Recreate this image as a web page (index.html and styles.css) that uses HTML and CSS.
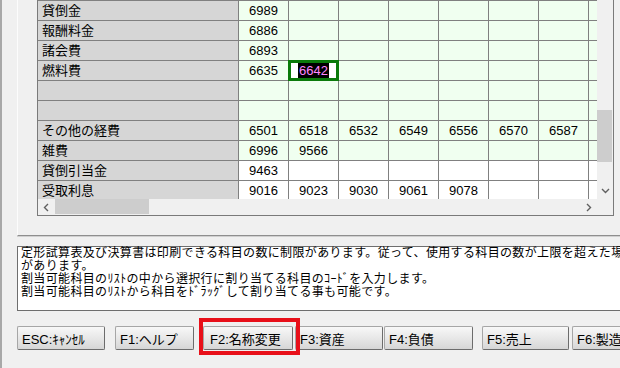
FILE: index.html
```html
<!DOCTYPE html>
<html lang="ja">
<head>
    <meta charset="UTF-8">
    <title>科目割当</title>
    <link rel="stylesheet" href="styles.css">
</head>
<body>
    <div class="window">
        <div class="group">
            <div class="grid-box">
                <div class="rows">
                    <div class="row green">
                        <div class="name">貸倒金</div><div class="cell code">6989</div>
                        <div class="cell"></div><div class="cell"></div><div class="cell"></div><div class="cell"></div><div class="cell"></div><div class="cell"></div>
                        <div class="fill"></div>
                    </div>
                    <div class="row green">
                        <div class="name">報酬料金</div><div class="cell code">6886</div>
                        <div class="cell"></div><div class="cell"></div><div class="cell"></div><div class="cell"></div><div class="cell"></div><div class="cell"></div>
                        <div class="fill"></div>
                    </div>
                    <div class="row green">
                        <div class="name">諸会費</div><div class="cell code">6893</div>
                        <div class="cell"></div><div class="cell"></div><div class="cell"></div><div class="cell"></div><div class="cell"></div><div class="cell"></div>
                        <div class="fill"></div>
                    </div>
                    <div class="row green">
                        <div class="name">燃料費</div><div class="cell code">6635</div>
                        <div class="cell edit"><span class="sel">6642</span></div><div class="cell"></div><div class="cell"></div><div class="cell"></div><div class="cell"></div><div class="cell"></div>
                        <div class="fill"></div>
                    </div>
                    <div class="row green">
                        <div class="name"></div><div class="cell code"></div>
                        <div class="cell"></div><div class="cell"></div><div class="cell"></div><div class="cell"></div><div class="cell"></div><div class="cell"></div>
                        <div class="fill"></div>
                    </div>
                    <div class="row green">
                        <div class="name"></div><div class="cell code"></div>
                        <div class="cell"></div><div class="cell"></div><div class="cell"></div><div class="cell"></div><div class="cell"></div><div class="cell"></div>
                        <div class="fill"></div>
                    </div>
                    <div class="row green">
                        <div class="name">その他の経費</div><div class="cell code">6501</div>
                        <div class="cell">6518</div><div class="cell">6532</div><div class="cell">6549</div><div class="cell">6556</div><div class="cell">6570</div><div class="cell">6587</div>
                        <div class="fill"></div>
                    </div>
                    <div class="row green">
                        <div class="name">雑費</div><div class="cell code">6996</div>
                        <div class="cell">9566</div><div class="cell"></div><div class="cell"></div><div class="cell"></div><div class="cell"></div><div class="cell"></div>
                        <div class="fill"></div>
                    </div>
                    <div class="row">
                        <div class="name">貸倒引当金</div><div class="cell code">9463</div>
                        <div class="cell"></div><div class="cell"></div><div class="cell"></div><div class="cell"></div><div class="cell"></div><div class="cell"></div>
                        <div class="fill"></div>
                    </div>
                    <div class="row">
                        <div class="name">受取利息</div><div class="cell code">9016</div>
                        <div class="cell">9023</div><div class="cell">9030</div><div class="cell">9061</div><div class="cell">9078</div><div class="cell"></div><div class="cell"></div>
                        <div class="fill"></div>
                    </div>
                </div>

                <div class="vscroll">
                    <div class="vthumb"></div>
                    <div class="arrow">
                        <svg width="9" height="6" viewBox="0 0 9 6"><path d="M1 1 L4.5 4.5 L8 1" fill="none" stroke="#606060" stroke-width="1.4"/></svg>
                    </div>
                </div>

                <div class="hscroll">
                    <div class="arrow">
                        <svg width="6" height="9" viewBox="0 0 6 9"><path d="M5 1 L1.5 4.5 L5 8" fill="none" stroke="#606060" stroke-width="1.4"/></svg>
                    </div>
                    <div class="hthumb"></div>
                    <div class="arrow">
                        <svg width="6" height="9" viewBox="0 0 6 9"><path d="M1 1 L4.5 4.5 L1 8" fill="none" stroke="#606060" stroke-width="1.4"/></svg>
                    </div>
                </div>

                <div class="corner"></div>
            </div>
        </div>

        <div class="message">
            定形試算表及び決算書は印刷できる科目の数に制限があります。従って、使用する科目の数が上限を超えた場合、印刷されない科目<br>
            があります。<br>
            割当可能科目のﾘｽﾄの中から選択行に割り当てる科目のｺｰﾄﾞを入力します。<br>
            割当可能科目のﾘｽﾄから科目をﾄﾞﾗｯｸﾞして割り当てる事も可能です。
        </div>

        <div class="buttons">
            <button class="btn btn-esc">ESC:ｷｬﾝｾﾙ</button>
            <button class="btn btn-f1">F1:ヘルプ</button>
            <button class="btn btn-f2">F2:名称変更</button>
            <button class="btn btn-f3">F3:資産</button>
            <button class="btn btn-f4">F4:負債</button>
            <button class="btn btn-f5">F5:売上</button>
            <button class="btn btn-f6">F6:製造</button>
            <div class="highlight"></div>
        </div>
    </div>
</body>
</html>
```

FILE: styles.css
```css
body {
    margin: 0;
    padding: 0;
    background-color: #f0f0f0;
    font-family: "Liberation Sans", "Noto Sans CJK JP", sans-serif;
    font-size: 13px;
    color: #000;
    overflow: hidden;
}
.window {
    width: 620px;
    height: 368px;
    overflow: hidden;
    box-shadow: inset 2px 0 #a8a8a8;
}
.group {
    margin-left: 17px;
    padding: 0 0 19px 19px;
    border-left: 1px solid #fcfcfc;
    border-bottom: 1px solid #8e8e8e;
    box-shadow: 0 1px 0 #d0d0d0;
}
.grid-box {
    width: 575px;
    display: grid;
    grid-template-columns: 559px 16px;
    grid-template-rows: 199px 16px;
    border: 1px solid #7a7a7a;
    border-top: none;
}
.rows {
    overflow: hidden;
    border-top: 1px solid #808080;
    background: #fff;
}
.row {
    display: flex;
    height: 20px;
    box-sizing: border-box;
    border-bottom: 1px solid #808080;
    background: #fff;
}
.row.green {
    background: #f0fff0;
}
.name {
    flex: 0 0 201px;
    box-sizing: border-box;
    padding-left: 4px;
    border-right: 1px solid #808080;
    background: #d6d6d6;
    line-height: 19px;
    white-space: nowrap;
}
.cell {
    flex: 0 0 50px;
    box-sizing: border-box;
    border-right: 1px solid #808080;
    text-align: center;
    line-height: 19px;
}
.fill {
    flex: 1;
}
.cell.edit {
    position: relative;
    background: #fff;
}
.cell.edit::after {
    content: "";
    position: absolute;
    top: -1px;
    left: -1px;
    right: -1px;
    bottom: -1px;
    border: 3px solid #0a7a0a;
}
.sel {
    background: #000;
    color: #ff88ff;
    padding: 1px 1px;
}
.vscroll {
    display: flex;
    flex-direction: column;
    background: #f0f0f0;
}
.vthumb {
    margin: 110px 1px 0 0;
    height: 52px;
    background: #cdcdcd;
}
.vscroll .arrow {
    margin-top: auto;
}
.arrow {
    width: 16px;
    height: 16px;
    display: flex;
    align-items: center;
    justify-content: center;
}
.hscroll {
    display: flex;
    background: #f0f0f0;
}
.hthumb {
    width: 94px;
    margin: 0 0 1px 1px;
    background: #cdcdcd;
}
.hscroll .arrow:last-child {
    margin-left: auto;
}
.corner {
    background: #f0f0f0;
}
.message {
    margin: 10px 0 0 17px;
    width: 720px;
    height: 63px;
    padding-left: 3px;
    border: 1px solid #6e6e6e;
    background: #fff;
    font-size: 12px;
    line-height: 13px;
    letter-spacing: 0.35px;
    white-space: nowrap;
}
.buttons {
    position: relative;
    display: flex;
    margin: 15px 0 0 17px;
    height: 24px;
}
.btn {
    flex: 0 0 auto;
    height: 24px;
    padding: 0 0 0 4px;
    text-align: left;
    font-family: inherit;
    font-size: 13px;
    color: #000;
    border: 1px solid #a6a6a6;
    border-right-color: #6c6c6c;
    border-bottom-color: #6c6c6c;
    border-radius: 2px;
    background: linear-gradient(#f8f8f8, #e6e6e6 55%, #d6d6d6);
    white-space: nowrap;
}
.btn-esc { width: 88px; }
.btn-f1 { width: 79px; margin-left: 10px; }
.btn-f2 { width: 90px; margin-left: 9px; padding-left: 6px; }
.btn-f3 { width: 88px; margin-left: 2px; }
.btn-f4 { width: 89px; margin-left: 1px; }
.btn-f5 { width: 87px; margin-left: 9px; }
.btn-f6 { width: 88px; margin-left: 3px; }
.highlight {
    position: absolute;
    left: 182px;
    top: -8px;
    width: 93px;
    height: 29px;
    border: 4px solid #e8101a;
}
```
